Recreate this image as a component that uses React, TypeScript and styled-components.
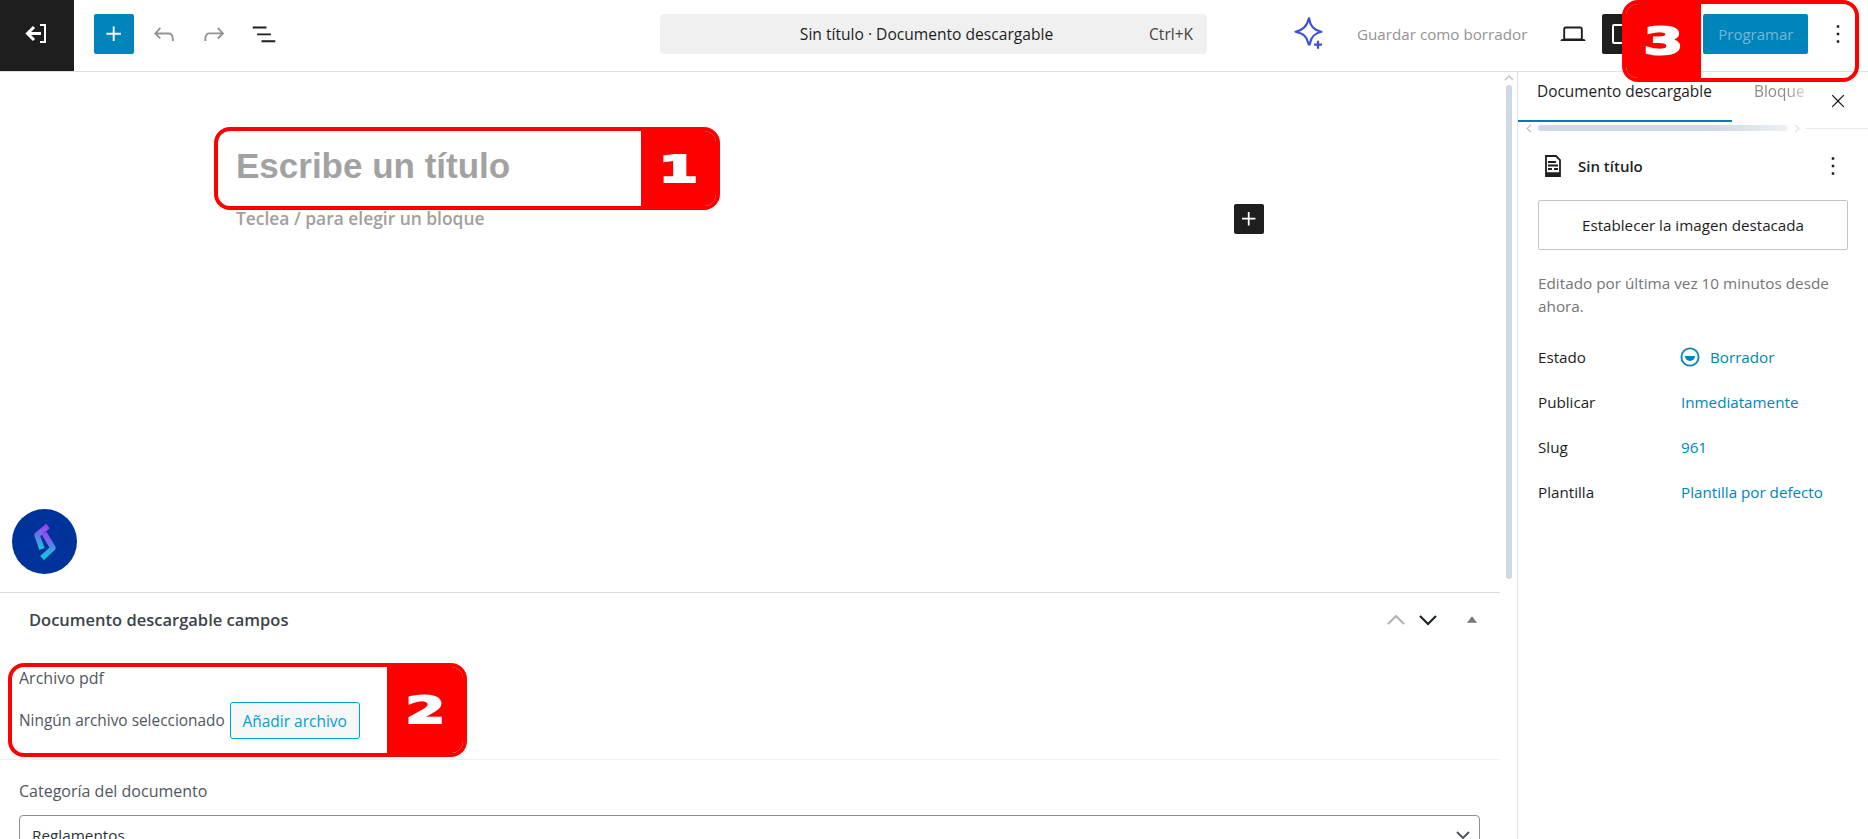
import React from "react";
import styled, { createGlobalStyle } from "styled-components";

const GlobalStyle = createGlobalStyle`
    html, body {
        margin: 0;
        padding: 0;
        height: 100%;
        overflow: hidden;
        background: #fff;
        font-family: "Open Sans", "Liberation Sans", sans-serif;
    }
    * { box-sizing: border-box; }
`;

const Icon = ({ d, size = 24, color = "currentColor" }: { d: string; size?: number; color?: string }) => (
    <svg width={size} height={size} viewBox="0 0 24 24" fill={color}>
        <path d={d} />
    </svg>
);

const PLUS = "M11 12.5V17.5H12.5V12.5H17.5V11H12.5V6H11V11H6V12.5H11Z";
const UNDO = "M18.3 11.7c-.6-.6-1.4-.9-2.3-.9H6.7l2.9-3.3-1.1-1-4.5 5L8.5 16l1-1-2.7-2.7H16c.5 0 .9.2 1.3.5 1 1 1 3.4 1 4.5v.3h1.5v-.2c0-1.5 0-4.3-1.5-5.7z";
const REDO = "M15.6 6.5l-1.1 1 2.9 3.3H8c-.9 0-1.7.3-2.3.9-1.4 1.5-1.4 4.2-1.4 5.6v.2h1.5v-.3c0-1.1 0-3.5 1-4.5.3-.3.7-.5 1.3-.5h9.2L14.5 15l1.1 1.1 4.6-4.6-4.6-5z";
const LIST = "M3 6h11v1.5H3V6Zm3.5 5.5h11V13h-11v-1.5ZM21 17H10v1.5h11V17Z";
const LAPTOP = "M20.5 16h-.7V8c0-1.1-.9-2-2-2H6.2c-1.1 0-2 .9-2 2v8h-.7c-.8 0-1.5.7-1.5 1.5h20c0-.8-.7-1.5-1.5-1.5zM5.7 8c0-.3.2-.5.5-.5h11.6c.3 0 .5.2.5.5v7.6H5.7V8z";
const MORE = "M13 19h-2v-2h2v2zm0-6h-2v-2h2v2zm0-6h-2V5h2v2z";
const CLOSE = "m13.06 12 6.47-6.47-1.06-1.06L12 10.94 5.53 4.47 4.47 5.53 10.94 12l-6.47 6.47 1.06 1.06L12 13.06l6.47 6.47 1.06-1.06L13.06 12Z";

const Page = styled.div`
    position: relative;
    width: 1868px;
    height: 839px;
    overflow: hidden;
    display: flex;
    flex-direction: column;
`;

// barra superior
const Toolbar = styled.header`
    height: 72px;
    flex: none;
    padding-bottom: 3px;
    display: flex;
    align-items: center;
    border-bottom: 1px solid #e0e0e0;
`;

const ExitLink = styled.div`
    width: 74px;
    height: 71px;
    margin-bottom: -3px;
    padding-bottom: 3px;
    background: #1e1e1e;
    display: flex;
    align-items: center;
    justify-content: center;
`;

const ToolLeft = styled.div`
    width: 586px;
    padding-left: 20px;
    display: flex;
    align-items: center;
`;

const AddButton = styled.div`
    width: 40px;
    height: 40px;
    border-radius: 2px;
    background: #0085ba;
    color: #fff;
    display: flex;
    align-items: center;
    justify-content: center;
`;

const ToolButton = styled.div<{ $muted?: boolean; $gap?: number }>`
    width: 30px;
    height: 30px;
    margin-left: ${(p) => p.$gap ?? 20}px;
    color: ${(p) => (p.$muted ? "#949494" : "#1e1e1e")};
    display: flex;
`;

const CommandBar = styled.div`
    width: 547px;
    height: 40px;
    background: #f0f0f0;
    border-radius: 4px;
    color: #1e1e1e;
    font-size: 15.6px;
    display: flex;
    align-items: center;
    justify-content: center;
    position: relative;
    padding-right: 14px;
`;

const Shortcut = styled.span`
    position: absolute;
    right: 14px;
    font-size: 15.5px;
    color: #444;
`;

const ToolRight = styled.div`
    flex: 1;
    display: flex;
    align-items: center;
    padding-left: 84px;
`;

const SaveDraft = styled.span`
    margin-left: 30px;
    font-size: 15.2px;
    color: #949494;
    white-space: nowrap;
`;

const DeviceButton = styled.div`
    margin-left: 31px;
    display: flex;
    color: #1e1e1e;
`;

const PreviewButton = styled.div`
    width: 40px;
    height: 40px;
    margin-left: 14px;
    border-radius: 2px;
    background: #1e1e1e;
    display: flex;
    align-items: center;
    padding-left: 10px;
`;

const PreviewFrame = styled.div`
    width: 26px;
    height: 20px;
    border: 2px solid #fff;
    border-radius: 2px;
`;

const PublishButton = styled.div`
    width: 105px;
    height: 40px;
    margin-left: 61px;
    border-radius: 2px;
    background: #0085ba;
    color: #76b6d5;
    font-size: 15px;
    display: flex;
    align-items: center;
    justify-content: center;
`;

const PublishMore = styled.div`
    margin-left: 15px;
    display: flex;
    color: #1e1e1e;
`;

// cuerpo
const Body = styled.div`
    flex: 1;
    min-height: 0;
    display: flex;
`;

const Content = styled.main`
    width: 1500px;
    flex: none;
    display: flex;
    flex-direction: column;
`;

const Scrollbar = styled.div`
    width: 17px;
    flex: none;
    padding: 3px 5px 0 6px;
    display: flex;
    flex-direction: column;
    align-items: center;
    gap: 4px;
`;

const ScrollThumb = styled.div`
    width: 6px;
    height: 494px;
    background: #cfd9e3;
    border-radius: 3px;
`;

const Canvas = styled.section`
    height: 520px;
    flex: none;
    padding: 73px 0 0 236px;
`;

const PostTitle = styled.h1`
    margin: 0;
    font-family: "Liberation Sans", Arial, sans-serif;
    font-size: 35px;
    line-height: 42px;
    font-weight: 700;
    color: #a2a2a2;
`;

const BlockRow = styled.div`
    width: 1028px;
    margin-top: 17px;
    display: flex;
    align-items: center;
    justify-content: space-between;
`;

const BlockHint = styled.p`
    margin: 0 0 3px;
    font-size: 17.4px;
    font-weight: 600;
    color: #a0a0a0;
`;

const InsertButton = styled.div`
    width: 30px;
    height: 30px;
    border-radius: 2px;
    background: #1e1e1e;
    color: #fff;
    display: flex;
    align-items: center;
    justify-content: center;
`;

const Metabox = styled.section`
    border-top: 1px solid #dcdcde;
    flex: 1;
    min-height: 0;
    overflow: hidden;
`;

const MetaHeader = styled.div`
    height: 53px;
    padding: 0 0 0 29px;
    display: flex;
    align-items: center;
`;

const MetaTitle = styled.h2`
    flex: 1;
    margin: 0;
    font-size: 16.5px;
    font-weight: 600;
    color: #3c434a;
`;

const MetaControl = styled.div<{ $width: number }>`
    width: ${(p) => p.$width}px;
    display: flex;
    justify-content: center;
`;

const Field = styled.div<{ $divided?: boolean }>`
    padding: ${(p) => (p.$divided ? 22 : 21)}px 19px 0;
    height: ${(p) => (p.$divided ? 114 : 90)}px;
    border-bottom: ${(p) => (p.$divided ? "1px solid #f0f0f1" : "none")};
`;

const FieldLabel = styled.div`
    font-size: 16px;
    line-height: 20px;
    font-weight: 500;
    color: #50575e;
`;

const FileRow = styled.div`
    margin-top: 14px;
    display: flex;
    align-items: center;
    gap: 5px;
    font-size: 15.4px;
    color: #50575e;
`;

const FileButton = styled.div`
    width: 130px;
    height: 37px;
    border: 1px solid #00a0d2;
    border-radius: 3px;
    background: #f6f7f7;
    color: #00a0d2;
    font-size: 15.5px;
    display: flex;
    align-items: center;
    justify-content: center;
`;

const SelectBox = styled.div`
    width: 1461px;
    height: 40px;
    margin-top: 14px;
    padding: 0 8px 0 12px;
    border: 1px solid #8c8f94;
    border-radius: 4px;
    color: #2c3338;
    font-size: 15.3px;
    display: flex;
    align-items: center;
    justify-content: space-between;
`;

const FloatingLogo = styled.div`
    position: absolute;
    left: 12px;
    top: 509px;
    width: 65px;
    height: 65px;
    border-radius: 50%;
    background: #003399;
    display: flex;
    align-items: center;
    justify-content: center;
`;

// panel lateral
const Sidebar = styled.aside`
    width: 351px;
    flex: none;
    border-left: 1px solid #e0e0e0;
    display: flex;
    flex-direction: column;
`;

const TabBar = styled.div`
    height: 50px;
    flex: none;
    display: flex;
    position: relative;
`;

const Tab = styled.div<{ $active?: boolean }>`
    height: 50px;
    width: ${(p) => (p.$active ? 214 : 77)}px;
    padding: 9px 0 0 ${(p) => (p.$active ? 19 : 22)}px;
    white-space: nowrap;
    overflow: hidden;
    font-size: 15.4px;
    color: ${(p) => (p.$active ? "#1e1e1e" : "#8a8a8a")};
    border-bottom: 2px solid ${(p) => (p.$active ? "#007cba" : "transparent")};
    ${(p) => (p.$active ? "" : "mask-image: linear-gradient(to right, #000 70%, rgba(0,0,0,.2));")}
`;

const TabClose = styled.div`
    margin-left: 19px;
    margin-top: 19px;
    display: flex;
    color: #1e1e1e;
`;

const TabScroll = styled.div`
    height: 10px;
    flex: none;
    padding: 2px 0 0 8px;
    display: flex;
    align-items: center;
    gap: 6px;
`;

const TabScrollThumb = styled.div`
    width: 250px;
    height: 6px;
    border-radius: 3px;
    background: linear-gradient(to right, #cfd9e3 70%, #eef1f4);
`;

const TabScrollLine = styled.div`
    flex: 1;
    height: 1px;
    background: #e9e9e9;
`;

const SidePanel = styled.div`
    padding: 0 20px;
`;

const PostHeader = styled.div`
    height: 68px;
    padding-left: 6px;
    display: flex;
    align-items: center;
`;

const PostName = styled.span`
    flex: 1;
    margin-left: 16px;
    font-size: 15px;
    font-weight: 600;
    color: #1e1e1e;
`;

const PostMore = styled.div`
    display: flex;
    color: #1e1e1e;
`;

const FeaturedButton = styled.div`
    width: 310px;
    height: 50px;
    border: 1px solid #c3c4c7;
    border-radius: 2px;
    display: flex;
    align-items: center;
    justify-content: center;
    font-size: 15.2px;
    color: #1e1e1e;
`;

const EditedNote = styled.p`
    margin: 22px 0 0;
    font-size: 15.3px;
    line-height: 23px;
    color: #757575;
`;

const MetaRows = styled.div`
    margin-top: 16px;
    display: flex;
    flex-direction: column;
`;

const MetaRow = styled.div`
    height: 45px;
    display: flex;
    align-items: center;
    font-size: 15.2px;
    color: #1e1e1e;
`;

const MetaKey = styled.span`
    width: 143px;
`;

const MetaValue = styled.span<{ $withIcon?: boolean }>`
    display: flex;
    align-items: center;
    gap: 10px;
    margin-left: ${(p) => (p.$withIcon ? -1 : 0)}px;
    color: #0085ba;
`;

// anotaciones rojas sobre la captura
const Callout = styled.div<{ $left: number; $top: number; $width: number; $height: number }>`
    position: absolute;
    left: ${(p) => p.$left}px;
    top: ${(p) => p.$top}px;
    width: ${(p) => p.$width}px;
    height: ${(p) => p.$height}px;
    border: 4px solid #ff0000;
    border-radius: 16px;
    display: flex;
    justify-content: flex-end;
    overflow: hidden;
`;

const CalloutBadge = styled.div<{ $width: number; $side?: "left" | "right" }>`
    width: ${(p) => p.$width}px;
    background: #ff0000;
    display: flex;
    align-items: center;
    justify-content: center;
    ${(p) => (p.$side === "left" ? "margin-right: auto;" : "")}
`;

const CalloutNumber = styled.span`
    color: #fff;
    font-family: "DejaVu Sans", sans-serif;
    font-size: 38px;
    font-weight: 700;
    -webkit-text-stroke: 2px #fff;
    transform: scaleX(1.5);
`;

const metaRows = [
    { key: "Publicar", value: "Inmediatamente" },
    { key: "Slug", value: "961" },
    { key: "Plantilla", value: "Plantilla por defecto" },
];

const App = () => {
    return (
        <Page>
            <GlobalStyle />
            <Toolbar>
                <ExitLink>
                    <svg width="24" height="24" viewBox="0 0 24 24" fill="none" stroke="#fff" strokeWidth="3">
                        <path d="M16 11.500H3M9 5l-6.500 6.500L9 18" />
                        <path d="M15 3h5v17h-5" strokeWidth="2" />
                    </svg>
                </ExitLink>
                <ToolLeft>
                    <AddButton><Icon d={PLUS} size={30} /></AddButton>
                    <ToolButton $muted $gap={15}><Icon d={UNDO} size={30} /></ToolButton>
                    <ToolButton $muted><Icon d={REDO} size={30} /></ToolButton>
                    <ToolButton><Icon d={LIST} size={30} /></ToolButton>
                </ToolLeft>
                <CommandBar>
                    Sin título · Documento descargable
                    <Shortcut>Ctrl+K</Shortcut>
                </CommandBar>
                <ToolRight>
                    <svg width="36" height="36" viewBox="0 0 32 32" fill="none" stroke="#3f51d8" strokeWidth="2">
                        <path d="M16 2c1 7 4 10.500 11 12-6 1.500-9 4-10 10-.3 2-1.300 2-1.700 0C14 18 11 15.500 4 14c7-1.500 10-5 12-12z" strokeLinejoin="round" />
                        <path d="M24 22v7M20.500 25.500h7" />
                    </svg>
                    <SaveDraft>Guardar como borrador</SaveDraft>
                    <DeviceButton><Icon d={LAPTOP} size={30} /></DeviceButton>
                    <PreviewButton><PreviewFrame /></PreviewButton>
                    <PublishButton>Programar</PublishButton>
                    <PublishMore><Icon d={MORE} size={30} /></PublishMore>
                </ToolRight>
            </Toolbar>

            <Body>
                <Content>
                    <Canvas>
                        <PostTitle>Escribe un título</PostTitle>
                        <BlockRow>
                            <BlockHint>Teclea / para elegir un bloque</BlockHint>
                            <InsertButton><Icon d={PLUS} size={28} /></InsertButton>
                        </BlockRow>
                    </Canvas>
                    <Metabox>
                        <MetaHeader>
                            <MetaTitle>Documento descargable campos</MetaTitle>
                            <MetaControl $width={32}>
                                <svg width="20" height="12" viewBox="0 0 20 12" fill="none" stroke="#b4b4b4" strokeWidth="2.2"><path d="M2 10l8-8 8 8" /></svg>
                            </MetaControl>
                            <MetaControl $width={32}>
                                <svg width="20" height="12" viewBox="0 0 20 12" fill="none" stroke="#1d2327" strokeWidth="2.2"><path d="M2 2l8 8 8-8" /></svg>
                            </MetaControl>
                            <MetaControl $width={56}>
                                <svg width="10" height="7" viewBox="0 0 12 8" fill="#72777c"><path d="M6 0l6 8H0z" /></svg>
                            </MetaControl>
                        </MetaHeader>
                        <Field $divided>
                            <FieldLabel>Archivo pdf</FieldLabel>
                            <FileRow>
                                Ningún archivo seleccionado
                                <FileButton>Añadir archivo</FileButton>
                            </FileRow>
                        </Field>
                        <Field>
                            <FieldLabel>Categoría del documento</FieldLabel>
                            <SelectBox>
                                Reglamentos
                                <svg width="16" height="10" viewBox="0 0 16 10" fill="none" stroke="#50575e" strokeWidth="2"><path d="M2 2l6 6 6-6" /></svg>
                            </SelectBox>
                        </Field>
                    </Metabox>
                </Content>

                <Scrollbar>
                    <svg width="10" height="6" viewBox="0 0 10 6" fill="none" stroke="#c4c4c4" strokeWidth="1.500"><path d="M1 5l4-4 4 4" /></svg>
                    <ScrollThumb />
                </Scrollbar>

                <Sidebar>
                    <TabBar>
                        <Tab $active>Documento descargable</Tab>
                        <Tab>Bloque</Tab>
                        <TabClose><Icon d={CLOSE} size={20} /></TabClose>
                    </TabBar>
                    <TabScroll>
                        <svg width="6" height="9" viewBox="0 0 6 9" fill="none" stroke="#c4c4c4" strokeWidth="1.300"><path d="M5 1L1 4.500 5 8" /></svg>
                        <TabScrollThumb />
                        <svg width="6" height="9" viewBox="0 0 6 9" fill="none" stroke="#e4e4e4" strokeWidth="1.300"><path d="M1 1l4 3.500L1 8" /></svg>
                        <TabScrollLine />
                    </TabScroll>
                    <SidePanel>
                        <PostHeader>
                            <svg width="18" height="22" viewBox="0 0 18 22" fill="none" stroke="#1e1e1e" strokeWidth="1.800">
                                <path d="M2 1h10l4 4v16H2z" />
                                <path d="M4 7h8M4 10.500h10M4 14h4M10 14h4" strokeWidth="2" />
                                <path d="M2 19h14" strokeWidth="3.500" />
                            </svg>
                            <PostName>Sin título</PostName>
                            <PostMore><Icon d={MORE} size={30} /></PostMore>
                        </PostHeader>
                        <FeaturedButton>Establecer la imagen destacada</FeaturedButton>
                        <EditedNote>Editado por última vez 10 minutos desde ahora.</EditedNote>
                        <MetaRows>
                            <MetaRow>
                                <MetaKey>Estado</MetaKey>
                                <MetaValue $withIcon>
                                    <svg width="20" height="20" viewBox="0 0 20 20" fill="none" stroke="#0085ba" strokeWidth="1.800">
                                        <circle cx="10" cy="10" r="8.600" />
                                        <path d="M5 9h10a5 5 0 0 1-10 0z" fill="#0085ba" stroke="none" />
                                    </svg>
                                    Borrador
                                </MetaValue>
                            </MetaRow>
                            {metaRows.map((row) => (
                                <MetaRow key={row.key}>
                                    <MetaKey>{row.key}</MetaKey>
                                    <MetaValue>{row.value}</MetaValue>
                                </MetaRow>
                            ))}
                        </MetaRows>
                    </SidePanel>
                </Sidebar>
            </Body>

            <FloatingLogo>
                <svg width="24" height="38" viewBox="0 0 24 38" fill="none" strokeWidth="5.500" strokeLinejoin="round">
                    <defs>
                        <linearGradient id="logoTop" x1="0" y1="0" x2="0" y2="1">
                            <stop offset="0" stopColor="#a040f0" />
                            <stop offset="1" stopColor="#10c8e0" />
                        </linearGradient>
                        <linearGradient id="logoBottom" x1="0" y1="0" x2="0" y2="1">
                            <stop offset="0" stopColor="#a040f0" />
                            <stop offset="1" stopColor="#10c8e0" />
                        </linearGradient>
                    </defs>
                    <path d="M15 3L4 12l5 14" stroke="url(#logoTop)" />
                    <path d="M11 10l9 15-11 10" stroke="url(#logoBottom)" />
                </svg>
            </FloatingLogo>

            <Callout $left={214} $top={127} $width={506} $height={83}>
                <CalloutBadge $width={75}><CalloutNumber>1</CalloutNumber></CalloutBadge>
            </Callout>
            <Callout $left={8} $top={663} $width={459} $height={94}>
                <CalloutBadge $width={76}><CalloutNumber>2</CalloutNumber></CalloutBadge>
            </Callout>
            <Callout $left={1622} $top={0} $width={237} $height={82}>
                <CalloutBadge $width={75} $side="left"><CalloutNumber>3</CalloutNumber></CalloutBadge>
            </Callout>
        </Page>
    );
};

export default App;
